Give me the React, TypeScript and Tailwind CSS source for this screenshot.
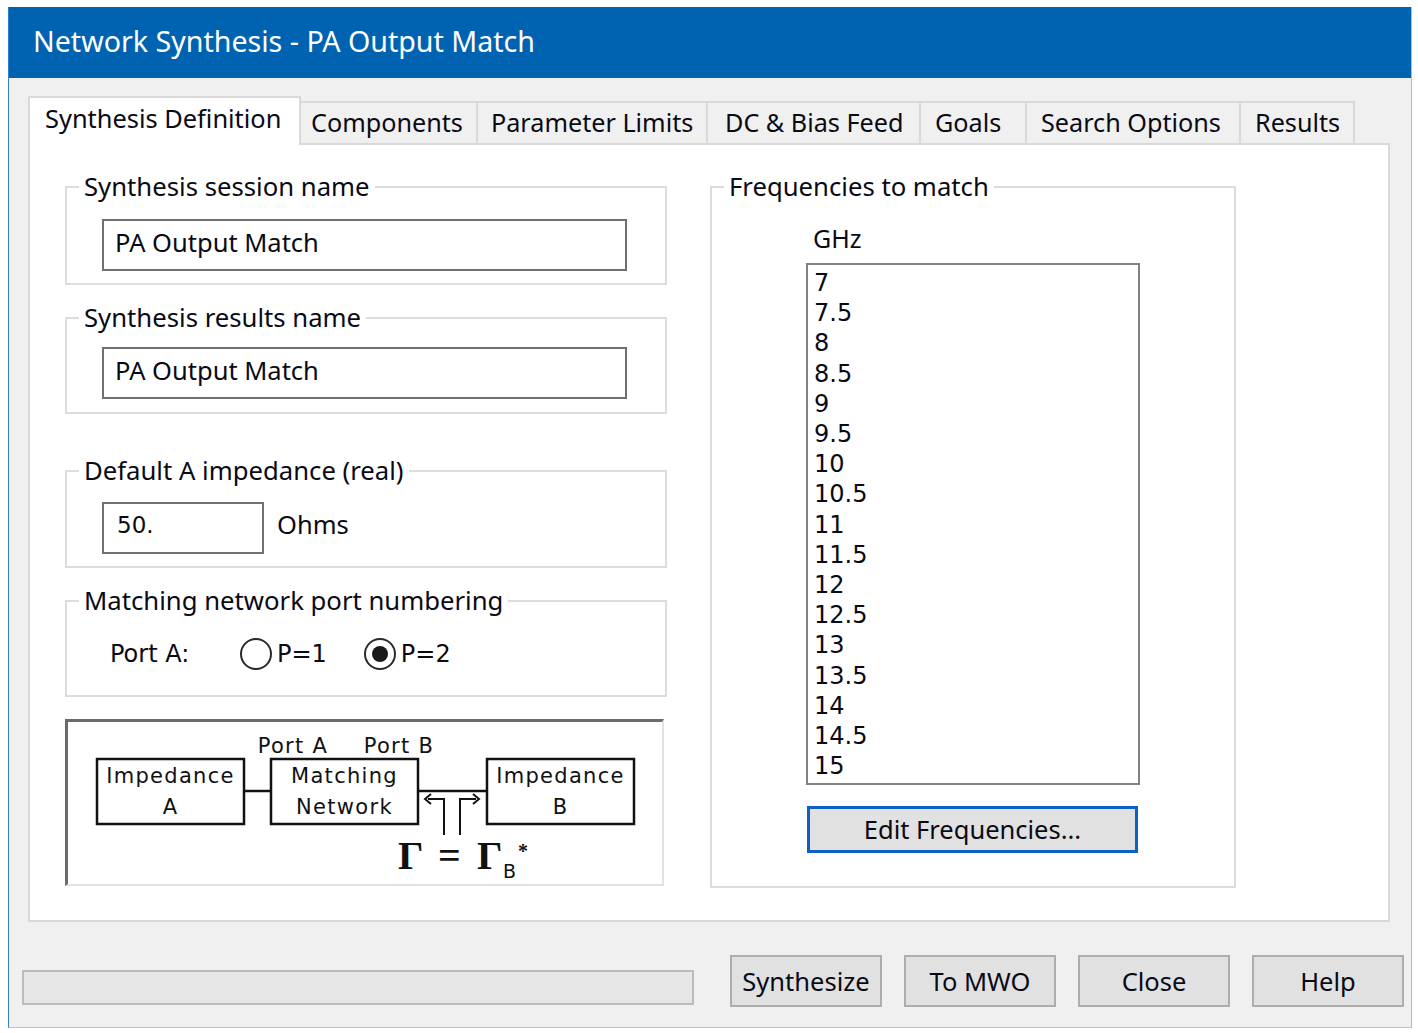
import React from "react";

const freqs = ["7", "7.5", "8", "8.5", "9", "9.5", "10", "10.5", "11", "11.5", "12", "12.5", "13", "13.5", "14", "14.5", "15"];

const tabs: { label: string; w: string; pl: string }[] = [
  { label: "Components", w: "w-[177px]", pl: "pl-[10px]" },
  { label: "Parameter Limits", w: "w-[230px]", pl: "pl-[13px]" },
  { label: "DC & Bias Feed", w: "w-[213px]", pl: "pl-[17px]" },
  { label: "Goals", w: "w-[106px]", pl: "pl-[14px]" },
  { label: "Search Options", w: "w-[214px]", pl: "pl-[14px]" },
  { label: "Results", w: "w-[114px]", pl: "pl-[14px]" },
];

function Legend({ children }: { children: React.ReactNode }) {
  return <legend className="ml-[12px] px-[5px] text-[25.7px] leading-[30px] text-[#0a0a14]">{children}</legend>;
}

function TextBox({ value, w }: { value: string; w: string }) {
  return (
    <div className={`${w} h-[52px] border-2 border-[#707070] bg-white flex items-center pl-[11px] pb-[6px] text-[25.5px] text-[#0a0a14]`}>
      {value}
    </div>
  );
}

function Radio({ checked, label }: { checked: boolean; label: string }) {
  return (
    <div className="flex items-center gap-[5px]">
      <div className="w-[32px] h-[32px] rounded-full border-2 border-[#2a2a2a] bg-white flex items-center justify-center">
        {checked && <div className="w-[16px] h-[16px] rounded-full bg-[#1a1a1a]" />}
      </div>
      <span className="font-['DejaVu_Sans',sans-serif] text-[24px] leading-[30px] text-[#0a0a14]">{label}</span>
    </div>
  );
}

function Diagram() {
  const sans = "DejaVu Sans, sans-serif";
  return (
    <div className="mt-[22px] w-[599px] h-[167px] bg-white border-t-[3px] border-l-[3px] border-r-2 border-b-2 border-t-[#6b6b6b] border-l-[#6b6b6b] border-r-[#e2e2e2] border-b-[#e2e2e2]">
      <svg width="594" height="162" viewBox="0 0 594 162">
        <g fill="none" stroke="#111" strokeWidth="2.5">
          <rect x="29" y="37" width="147" height="65" />
          <rect x="203" y="37" width="147" height="65" />
          <rect x="419" y="37" width="147" height="65" />
          <line x1="176" y1="69" x2="203" y2="69" />
          <line x1="350" y1="69" x2="419" y2="69" />
          <polyline points="376,113 376,77 360,77" strokeWidth="2" />
          <polyline points="363,72 357,77 363,82" strokeWidth="2" />
          <polyline points="392,113 392,77 408,77" strokeWidth="2" />
          <polyline points="405,72 411,77 405,82" strokeWidth="2" />
        </g>
        <g fill="#111" fontFamily={sans} fontSize="21" textAnchor="middle" letterSpacing="1.3">
          <text x="225" y="31">Port A</text>
          <text x="331" y="31">Port B</text>
          <text x="102.5" y="61">Impedance</text>
          <text x="102.5" y="92">A</text>
          <text x="276.5" y="61">Matching</text>
          <text x="276.5" y="92">Network</text>
          <text x="492.5" y="61">Impedance</text>
          <text x="492.5" y="92">B</text>
        </g>
        <g fill="#111" fontFamily="Liberation Serif, serif" fontWeight="bold">
          <text x="330" y="147" fontSize="40">Γ</text>
          <text x="370" y="147" fontSize="40">=</text>
          <text x="409" y="147" fontSize="40">Γ</text>
          <text x="435" y="156" fontSize="19" fontFamily={sans} fontWeight="normal">B</text>
          <text x="450" y="136" fontSize="20">*</text>
        </g>
      </svg>
    </div>
  );
}

export default function App() {
  return (
    <div className="w-[1418px] h-[1033px] bg-white overflow-hidden font-['Noto_Sans','DejaVu_Sans',sans-serif] text-[#0a0a14]">
      <div className="ml-[8px] mt-[7px] w-[1404px] h-[1021px] flex flex-col border-l border-r border-b border-l-[#2f7fd0] border-r-[#9cc0e4] border-b-[#a9c7e6]">
        {/* Title bar */}
        <div className="h-[71px] bg-[#0063b1] flex items-center pl-[24px] pb-[2px]">
          <span className="text-white text-[28.6px]">Network Synthesis - PA Output Match</span>
        </div>

        {/* Body */}
        <div className="flex-1 bg-[#f0f0f0] flex flex-col pt-[18px]">
          <div className="px-[19px]">
            {/* Tabs */}
            <div className="flex items-end">
              <div className="relative z-10 -mb-[2px] w-[273px] h-[49px] bg-white border-2 border-b-0 border-[#d9d9d9] flex items-center pl-[15px] pb-[7px] text-[25.4px]">
                Synthesis Definition
              </div>
              {tabs.map((t) => (
                <div
                  key={t.label}
                  className={`${t.w} ${t.pl} h-[42px] bg-[#f0f0f0] border-t-2 border-r-2 border-[#d9d9d9] flex items-center text-[25.2px]`}
                >
                  {t.label}
                </div>
              ))}
            </div>

            {/* Panel */}
            <div className="w-[1362px] h-[779px] bg-white border-2 border-[#d9d9d9] pl-[35px] pt-[27px] flex gap-[43px]">
              {/* Left column */}
              <div className="w-[602px] flex flex-col">
                <fieldset className="border-2 border-[#dcdcdc]">
                  <Legend>Synthesis session name</Legend>
                  <div className="px-[35px] pt-[17px] pb-[12px]">
                    <TextBox value="PA Output Match" w="w-[525px]" />
                  </div>
                </fieldset>
                <fieldset className="mt-[18px] border-2 border-[#dcdcdc]">
                  <Legend>Synthesis results name</Legend>
                  <div className="px-[35px] pt-[14px] pb-[13px]">
                    <TextBox value="PA Output Match" w="w-[525px]" />
                  </div>
                </fieldset>
                <fieldset className="mt-[42px] border-2 border-[#dcdcdc]">
                  <Legend>Default A impedance (real)</Legend>
                  <div className="px-[35px] pt-[16px] pb-[12px] flex items-center gap-[13px]">
                    <div className="w-[162px] h-[52px] border-2 border-[#707070] bg-white flex items-center pl-[13px] pb-[5px] font-['DejaVu_Sans',sans-serif] text-[23px]">
                      50.
                    </div>
                    <span className="text-[25.5px] leading-[30px] -mt-[8px]">Ohms</span>
                  </div>
                </fieldset>
                <fieldset className="mt-[18px] border-2 border-[#dcdcdc]">
                  <Legend>Matching network port numbering</Legend>
                  <div className="pl-[43px] pt-[22px] pb-[25px] flex items-center">
                    <span className="font-['DejaVu_Sans',sans-serif] text-[24px] leading-[30px] w-[130px]">Port A:</span>
                    <Radio checked={false} label="P=1" />
                    <div className="w-[37px]" />
                    <Radio checked={true} label="P=2" />
                  </div>
                </fieldset>
                <Diagram />
              </div>

              {/* Right column */}
              <fieldset className="w-[526px] h-[716px] border-2 border-[#dcdcdc]">
                <Legend>Frequencies to match</Legend>
                <div className="pl-[94px] pt-[21px]">
                  <div className="ml-[7px] text-[25px] leading-[30px]">GHz</div>
                  <div className="mt-[10px] w-[334px] h-[522px] border-2 border-[#828282] bg-white pt-[3px] pl-[6px] font-['DejaVu_Sans',sans-serif] text-[24px] leading-[30.2px]">
                    {freqs.map((f) => (
                      <div key={f}>{f}</div>
                    ))}
                  </div>
                  <div className="mt-[21px] w-[331px] h-[47px] ml-[1px] border-[3px] border-[#0f5fc4] bg-[#e1e1e1] flex items-center justify-center text-[25.5px]">
                    Edit Frequencies...
                  </div>
                </div>
              </fieldset>
            </div>
          </div>

          {/* Bottom row */}
          <div className="mt-[33px] pl-[13px] pr-[7px] flex items-end">
            <div className="mb-[2px] w-[672px] h-[35px] bg-[#e6e6e6] border-2 border-[#bcbcbc]" />
            <div className="ml-auto flex gap-[22px]">
              {["Synthesize", "To MWO", "Close", "Help"].map((b) => (
                <div
                  key={b}
                  className="w-[152px] h-[52px] bg-[#e1e1e1] border-2 border-[#adadad] flex items-center justify-center text-[25.5px]"
                >
                  {b}
                </div>
              ))}
            </div>
          </div>
        </div>
      </div>
    </div>
  );
}
